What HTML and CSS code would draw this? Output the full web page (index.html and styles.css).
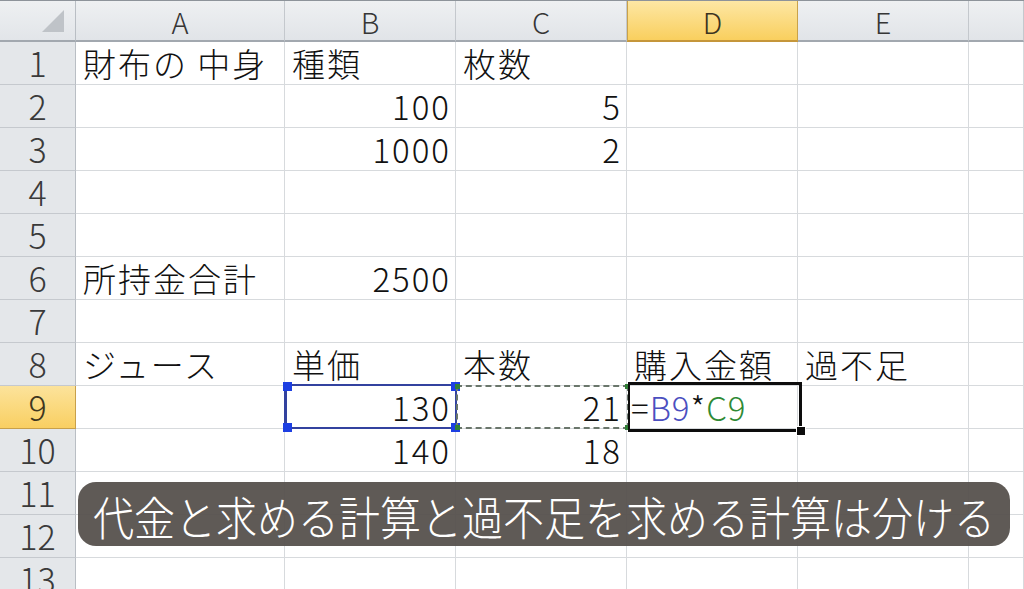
FILE: index.html
```html
<!DOCTYPE html>
<html lang="ja">
<head>
<meta charset="utf-8">
<title>Excel</title>
<link rel="stylesheet" href="styles.css">
</head>
<body>
<div class="sheet">
  <div class="row head">
    <div class="corner"><span class="tri"></span></div>
    <div class="ch">A</div>
    <div class="ch">B</div>
    <div class="ch">C</div>
    <div class="ch on">D</div>
    <div class="ch">E</div>
    <div class="ch"></div>
  </div>
  <div class="row">
    <div class="rh">1</div>
    <div class="c">財布の 中身</div>
    <div class="c">種類</div>
    <div class="c">枚数</div>
    <div class="c"></div><div class="c"></div><div class="c"></div>
  </div>
  <div class="row">
    <div class="rh">2</div>
    <div class="c"></div>
    <div class="c num">100</div>
    <div class="c num">5</div>
    <div class="c"></div><div class="c"></div><div class="c"></div>
  </div>
  <div class="row">
    <div class="rh">3</div>
    <div class="c"></div>
    <div class="c num">1000</div>
    <div class="c num">2</div>
    <div class="c"></div><div class="c"></div><div class="c"></div>
  </div>
  <div class="row">
    <div class="rh">4</div>
    <div class="c"></div><div class="c"></div><div class="c"></div><div class="c"></div><div class="c"></div><div class="c"></div>
  </div>
  <div class="row">
    <div class="rh">5</div>
    <div class="c"></div><div class="c"></div><div class="c"></div><div class="c"></div><div class="c"></div><div class="c"></div>
  </div>
  <div class="row">
    <div class="rh">6</div>
    <div class="c">所持金合計</div>
    <div class="c num">2500</div>
    <div class="c"></div><div class="c"></div><div class="c"></div><div class="c"></div>
  </div>
  <div class="row">
    <div class="rh">7</div>
    <div class="c"></div><div class="c"></div><div class="c"></div><div class="c"></div><div class="c"></div><div class="c"></div>
  </div>
  <div class="row">
    <div class="rh">8</div>
    <div class="c">ジュース</div>
    <div class="c">単価</div>
    <div class="c">本数</div>
    <div class="c">購入金額</div>
    <div class="c">過不足</div>
    <div class="c"></div>
  </div>
  <div class="row">
    <div class="rh on">9</div>
    <div class="c"></div>
    <div class="c num">130</div>
    <div class="c num">21</div>
    <div class="c formula">=<span class="ref-b">B9</span>*<span class="ref-c">C9</span></div>
    <div class="c"></div>
    <div class="c"></div>
  </div>
  <div class="row">
    <div class="rh">10</div>
    <div class="c"></div>
    <div class="c num">140</div>
    <div class="c num">18</div>
    <div class="c"></div><div class="c"></div><div class="c"></div>
  </div>
  <div class="row">
    <div class="rh">11</div>
    <div class="c"></div><div class="c"></div><div class="c"></div><div class="c"></div><div class="c"></div><div class="c"></div>
  </div>
  <div class="row">
    <div class="rh">12</div>
    <div class="c"></div><div class="c"></div><div class="c"></div><div class="c"></div><div class="c"></div><div class="c"></div>
  </div>
  <div class="row">
    <div class="rh">13</div>
    <div class="c"></div><div class="c"></div><div class="c"></div><div class="c"></div><div class="c"></div><div class="c"></div>
  </div>

  <div class="sel-b">
    <span class="h tl"></span><span class="h tr"></span><span class="h bl"></span><span class="h br"></span>
  </div>
  <div class="sel-c">
    <span class="g tl"></span><span class="g tr"></span><span class="g bl"></span><span class="g br"></span>
  </div>
  <div class="active"><span class="fill"></span></div>

  <div class="caption"><span>代金と求める計算と過不足を求める計算は分ける</span></div>
</div>
</body>
</html>
```
FILE: styles.css
```css
html, body {
  margin: 0;
  padding: 0;
  background: #ffffff;
  overflow: hidden;
}

.sheet {
  position: relative;
  width: 1024px;
  height: 589px;
  overflow: hidden;
  font-family: "Noto Sans CJK JP", "Noto Sans", sans-serif;
  font-weight: 300;
  color: #111;
}

.row {
  display: grid;
  grid-template-columns: 76px 209px 171px 171px 171px 171px 1fr;
  height: 43px;
}

.row.head {
  height: 42px;
  border-top: 1px solid #8d939a;
  box-sizing: border-box;
}

.corner {
  position: relative;
  background: linear-gradient(#eef0f2, #e2e5e9);
  border-right: 1px solid #b9bec4;
  border-bottom: 2px solid #a2a8af;
}

.tri {
  position: absolute;
  right: 11px;
  bottom: 8px;
  width: 0;
  height: 0;
  border-left: 22px solid transparent;
  border-bottom: 22px solid #bfc3c8;
}

.ch {
  display: flex;
  align-items: center;
  justify-content: center;
  background: linear-gradient(#eef0f2, #e1e4e8);
  border-right: 1px solid #c4c8cd;
  border-bottom: 2px solid #a2a8af;
  font-size: 29px;
  color: #363636;
  line-height: 38px;
  overflow: hidden;
}

.ch.on {
  background: linear-gradient(#fde7a4, #f9cf5e);
  border-right: 1px solid #c9a24a;
  border-left: 1px solid #c9a24a;
  border-bottom: 2px solid #c5963a;
  color: #3b3320;
}

.rh {
  display: flex;
  align-items: center;
  justify-content: center;
  background: #e4e7ea;
  border-right: 1px solid #b9bec4;
  border-bottom: 1px solid #c5c9ce;
  font-size: 34px;
  line-height: 42px;
  color: #3a3a3a;
  box-sizing: border-box;
  overflow: hidden;
}

.rh.on {
  background: linear-gradient(#fce39b, #f9cf62);
  border-bottom: 1px solid #c8a04a;
  border-right: 1px solid #c8a04a;
  color: #3f3620;
}

.c {
  box-sizing: border-box;
  border-right: 1px solid #d7dadd;
  border-bottom: 1px solid #d7dadd;
  font-size: 33px;
  line-height: 42px;
  letter-spacing: 2px;
  padding-left: 7px;
  white-space: nowrap;
  overflow: visible;
}

.c.num {
  text-align: right;
  padding-right: 4px;
  padding-left: 0;
}

.c.formula {
  padding-left: 4px;
  letter-spacing: 1px;
}

.ref-b { color: #4b4fc0; }
.ref-c { color: #2f8a35; }

/* selection overlays */
.sel-b {
  position: absolute;
  left: 284px;
  top: 384px;
  width: 173px;
  height: 45px;
  box-sizing: border-box;
  border: 2px solid #33429f;
  border-left-width: 3px;
}

.h {
  position: absolute;
  width: 9px;
  height: 9px;
  background: #1d3fe2;
}
.h.tl { left: -4px; top: -4px; }
.h.tr { right: -5px; top: -4px; }
.h.bl { left: -4px; bottom: -5px; }
.h.br { right: -5px; bottom: -5px; }

.sel-c {
  position: absolute;
  left: 456px;
  top: 385px;
  width: 173px;
  height: 44px;
  box-sizing: border-box;
  border: 2px dashed #6a766b;
}

.g {
  position: absolute;
  width: 5px;
  height: 5px;
  background: #2f7f36;
}
.g.tl { left: -3px; top: -3px; }
.g.tr { right: -3px; top: -3px; }
.g.bl { left: -3px; bottom: -3px; }
.g.br { right: -3px; bottom: -3px; }

.active {
  position: absolute;
  left: 628px;
  top: 382px;
  width: 174px;
  height: 50px;
  box-sizing: border-box;
  border: 3px solid #0d0d0d;
  border-left-width: 2px;
}

.fill {
  position: absolute;
  right: -7px;
  bottom: -7px;
  width: 8px;
  height: 8px;
  background: #0d0d0d;
  border: 1px solid #ffffff;
}

.caption {
  position: absolute;
  left: 78px;
  top: 482px;
  width: 932px;
  height: 64px;
  border-radius: 18px;
  background: rgba(86, 81, 77, 0.95);
  display: flex;
  align-items: center;
  justify-content: center;
}

.caption span {
  color: #ffffff;
  font-size: 41px;
  font-weight: 300;
  line-height: 1;
  letter-spacing: 0;
  transform: scaleY(1.12);
  white-space: nowrap;
  padding-top: 2px;
}
```
